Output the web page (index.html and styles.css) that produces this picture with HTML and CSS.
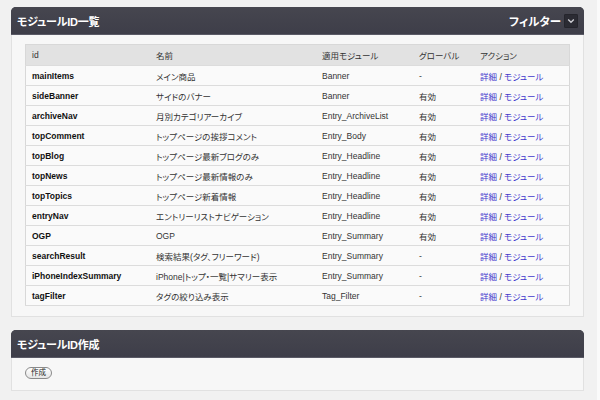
FILE: index.html
```html
<!DOCTYPE html>
<html lang="ja">
<head>
<meta charset="utf-8">
<title>モジュールID一覧</title>
<link rel="stylesheet" href="styles.css">
</head>
<body>
<div class="page">
  <section class="panel">
    <header class="panel-head">
      <h2 class="panel-title">モジュールID一覧</h2>
      <div class="filter">フィルター<span class="filter-btn"><svg width="8" height="6" viewBox="0 0 8 6"><path d="M1.2 1.5 L4 4.3 L6.8 1.5" fill="none" stroke="#d0d0d6" stroke-width="1.3"/></svg></span></div>
    </header>
    <div class="panel-body">
      <table class="list">
        <thead>
          <tr><th class="c-id">id</th><th class="c-name">名前</th><th class="c-mod">適用モジュール</th><th class="c-glob">グローバル</th><th class="c-act">アクション</th></tr>
        </thead>
        <tbody>
          <tr><td class="id">mainItems</td><td>メイン商品</td><td>Banner</td><td>-</td><td><a href="#">詳細</a> / <a href="#">モジュール</a></td></tr>
          <tr><td class="id">sideBanner</td><td>サイドのバナー</td><td>Banner</td><td>有効</td><td><a href="#">詳細</a> / <a href="#">モジュール</a></td></tr>
          <tr><td class="id">archiveNav</td><td>月別カテゴリアーカイブ</td><td>Entry_ArchiveList</td><td>有効</td><td><a href="#">詳細</a> / <a href="#">モジュール</a></td></tr>
          <tr><td class="id">topComment</td><td>トップページの挨拶コメント</td><td>Entry_Body</td><td>有効</td><td><a href="#">詳細</a> / <a href="#">モジュール</a></td></tr>
          <tr><td class="id">topBlog</td><td>トップページ最新ブログのみ</td><td>Entry_Headline</td><td>有効</td><td><a href="#">詳細</a> / <a href="#">モジュール</a></td></tr>
          <tr><td class="id">topNews</td><td>トップページ最新情報のみ</td><td>Entry_Headline</td><td>有効</td><td><a href="#">詳細</a> / <a href="#">モジュール</a></td></tr>
          <tr><td class="id">topTopics</td><td>トップページ新着情報</td><td>Entry_Headline</td><td>有効</td><td><a href="#">詳細</a> / <a href="#">モジュール</a></td></tr>
          <tr><td class="id">entryNav</td><td>エントリーリストナビゲーション</td><td>Entry_Headline</td><td>有効</td><td><a href="#">詳細</a> / <a href="#">モジュール</a></td></tr>
          <tr><td class="id">OGP</td><td>OGP</td><td>Entry_Summary</td><td>有効</td><td><a href="#">詳細</a> / <a href="#">モジュール</a></td></tr>
          <tr><td class="id">searchResult</td><td>検索結果(タグ、フリーワード)</td><td>Entry_Summary</td><td>-</td><td><a href="#">詳細</a> / <a href="#">モジュール</a></td></tr>
          <tr><td class="id">iPhoneIndexSummary</td><td>iPhone|トップ・一覧|サマリー表示</td><td>Entry_Summary</td><td>-</td><td><a href="#">詳細</a> / <a href="#">モジュール</a></td></tr>
          <tr><td class="id">tagFilter</td><td>タグの絞り込み表示</td><td>Tag_Filter</td><td>-</td><td><a href="#">詳細</a> / <a href="#">モジュール</a></td></tr>
        </tbody>
      </table>
    </div>
  </section>
  <section class="panel">
    <header class="panel-head">
      <h2 class="panel-title">モジュールID作成</h2>
    </header>
    <div class="panel-body small">
      <button class="pill" type="button">作成</button>
    </div>
  </section>
</div>
</body>
</html>
```
FILE: styles.css
```css
html {
  background: #fafafa;
}
body {
  margin: 0;
  font-family: "Liberation Sans", "Noto Sans CJK JP", sans-serif;
  font-feature-settings: "palt";
  color: #222;
}
.page {
  width: 597px;
  min-height: 400px;
  box-sizing: border-box;
  padding: 7px 13px 0 11px;
  background: #f1f1f1;
  display: flex;
  flex-direction: column;
  gap: 13px;
}
.panel {
  background: #f7f7f7;
  border: 1px solid #e1e1e1;
  border-top: none;
  border-radius: 5px 5px 0 0;
}
.panel-head {
  height: 28px;
  box-sizing: border-box;
  margin: 0 -1px;
  padding: 0 6px;
  display: flex;
  align-items: center;
  justify-content: space-between;
  background: #42424d;
  background-image: linear-gradient(#46464f, #3e3e49);
  border-radius: 5px 5px 0 0;
  border-bottom: 1px solid #5a5a66;
  color: #fff;
}
.panel-title {
  margin: 0;
  font-size: 11px;
  font-weight: bold;
  letter-spacing: -0.2px;
}
.filter {
  display: flex;
  align-items: center;
  gap: 3px;
  font-size: 11.5px;
  font-weight: bold;
}
.filter-btn {
  width: 12px;
  height: 12px;
  background: #2b2b33;
  border: 1px solid #25252c;
  border-radius: 1px;
  display: flex;
  align-items: center;
  justify-content: center;
}
.panel-body {
  padding: 9px 13px 10px 13px;
}
.panel-body.small {
  padding: 9px 13px 11px 13px;
}
.list {
  width: 100%;
  border-collapse: collapse;
  border: 1px solid #d8d8d8;
  font-size: 8.5px;
}
.list th, .list td {
  height: 19px;
  padding: 0 6px;
  text-align: left;
  border-bottom: 1px solid #dcdcdc;
  white-space: nowrap;
}
.list th {
  height: 20px;
  background: #e2e2e2;
  font-weight: normal;
  color: #333;
}
.list td {
  background: #fafafa;
  color: #333;
}
.list td.id {
  font-weight: bold;
  color: #111;
}
.c-id { width: 112px; }
.c-name { width: 154px; }
.c-mod { width: 85px; }
.c-glob { width: 49px; }
.list a {
  color: #4238cc;
  text-decoration: none;
}
.pill {
  display: block;
  font-family: inherit;
  font-size: 7.5px;
  padding: 0 5px;
  height: 12px;
  line-height: 10px;
  border: 1px solid #8a8a8a;
  border-radius: 6px;
  background: linear-gradient(#ffffff, #e6e6e6);
  color: #222;
}
```
